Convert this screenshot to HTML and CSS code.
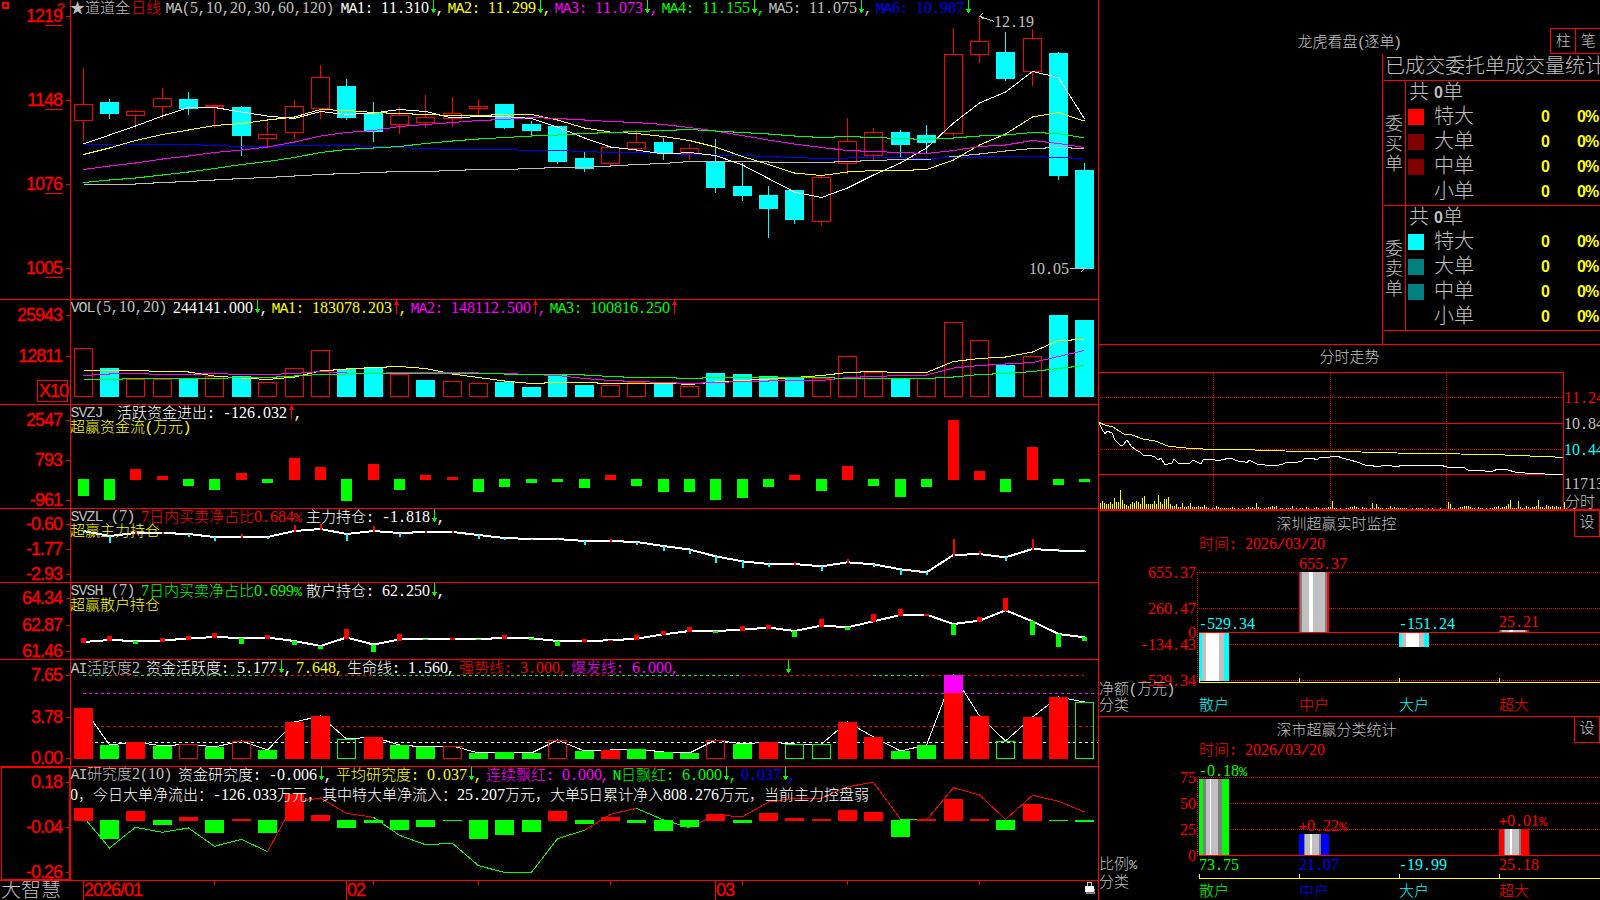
FILE: index.html
```html
<!DOCTYPE html>
<html lang="zh-CN">
<head>
    <meta charset="UTF-8">
    <meta name="viewport" content="width=device-width, initial-scale=1">
    <title>道道全 日线</title>
    <link rel="stylesheet" href="styles.css">
</head>
<body>
<div class="terminal">
    <div class="left">
        <div class="pane pane-k"><svg class="axis" id="axis-k"></svg><svg class="plot" id="plot-k"></svg></div>
        <div class="pane pane-vol"><svg class="axis" id="axis-vol"></svg><svg class="plot" id="plot-vol"></svg></div>
        <div class="pane pane-svzj"><svg class="axis" id="axis-svzj"></svg><svg class="plot" id="plot-svzj"></svg></div>
        <div class="pane pane-svzl"><svg class="axis" id="axis-svzl"></svg><svg class="plot" id="plot-svzl"></svg></div>
        <div class="pane pane-svsh"><svg class="axis" id="axis-svsh"></svg><svg class="plot" id="plot-svsh"></svg></div>
        <div class="pane pane-act"><svg class="axis" id="axis-act"></svg><svg class="plot" id="plot-act"></svg></div>
        <div class="pane pane-res"><svg class="axis" id="axis-res"></svg><svg class="plot" id="plot-res"></svg></div>
        <div class="dates">
            <div class="brand">大智慧</div>
            <svg class="plot" id="dates"></svg>
        </div>
    </div>

    <div class="right">
        <div class="orders">
            <div class="orders-head">
                <div class="title">龙虎看盘<span class="paren">(</span>逐单<span class="paren">)</span></div>
                <div class="tabs"><span>柱</span><span>笔</span></div>
            </div>
            <div class="stat">
                <div class="stat-title">已成交委托单成交量统计</div>
                <div class="group">
                    <div class="side">委买单</div>
                    <div class="rows">
                        <div class="total">共<b>0</b>单</div>
                        <div class="row"><i class="sw red"></i><span>特大</span><b>0</b><b>0%</b></div>
                        <div class="row"><i class="sw maroon"></i><span>大单</span><b>0</b><b>0%</b></div>
                        <div class="row"><i class="sw maroon"></i><span>中单</span><b>0</b><b>0%</b></div>
                        <div class="row"><i class="sw"></i><span>小单</span><b>0</b><b>0%</b></div>
                    </div>
                </div>
                <div class="group">
                    <div class="side">委卖单</div>
                    <div class="rows">
                        <div class="total">共<b>0</b>单</div>
                        <div class="row"><i class="sw cyan"></i><span>特大</span><b>0</b><b>0%</b></div>
                        <div class="row"><i class="sw teal"></i><span>大单</span><b>0</b><b>0%</b></div>
                        <div class="row"><i class="sw teal"></i><span>中单</span><b>0</b><b>0%</b></div>
                        <div class="row"><i class="sw"></i><span>小单</span><b>0</b><b>0%</b></div>
                    </div>
                </div>
            </div>
        </div>
        <div class="minute">
            <div class="title">分时走势</div>
            <svg id="minute"></svg>
        </div>
        <div class="monitor">
            <div class="panel-head"><div class="title">深圳超赢实时监控</div><span class="set">设</span></div>
            <svg id="monitor"></svg>
        </div>
        <div class="classify">
            <div class="panel-head"><div class="title">深市超赢分类统计</div><span class="set">设</span></div>
            <svg id="classify"></svg>
        </div>
    </div>
</div>
<script src="charts.js"></script>
</body>
</html>
```

FILE: styles.css
```css
* {
    box-sizing: border-box;
}

body {
    margin: 0;
    width: 1600px;
    height: 900px;
    overflow: hidden;
    background: #000;
    color: #c0c0c0;
    font-family: "Liberation Sans", "Noto Sans CJK SC", sans-serif;
    font-size: 15px;
    font-weight: 300;
}

svg {
    display: block;
    overflow: hidden;
    shape-rendering: crispEdges;
}

.terminal {
    display: grid;
    grid-template-columns: 1099px 501px;
    height: 900px;
}

.left {
    border-right: 1px solid #f00;
}

.pane,
.dates {
    display: grid;
    grid-template-columns: 71px 1027px;
    overflow: hidden;
}

.pane {
    border-bottom: 1px solid #f00;
}

.pane-k { height: 300px; }
.pane-vol { height: 105px; }
.pane-svzj { height: 104px; }
.pane-svzl { height: 74px; }
.pane-svsh { height: 77px; }
.pane-act { height: 107px; }
.pane-res { height: 114px; }

.axis,
.plot {
    width: 100%;
    height: 100%;
}

.axis {
    border-right: 1px solid #f00;
}

.dates {
    height: 19px;
}

.brand {
    padding-left: 1px;
    font-size: 20px;
    line-height: 19px;
    white-space: nowrap;
}

/* chart text */
text {
    font-family: "Liberation Mono", "Noto Sans CJK SC", monospace;
    font-size: 15px;
    text-anchor: middle;
}

.d {
    font-family: "Liberation Serif", serif;
    font-size: 16px;
}

.p {
    font-size: 13.5px;
}

.scale {
    font-family: "Liberation Sans", sans-serif;
    font-size: 18px;
    letter-spacing: -1px;
    text-anchor: end;
    fill: #f00;
    stroke: #f00;
    stroke-width: 0.3px;
}

.scale.start {
    text-anchor: start;
}

/* right side */
.right {
    display: grid;
    grid-template-rows: 345px 166px 206px 183px;
    overflow: hidden;
}

.right > div {
    overflow: hidden;
    border-bottom: 1px solid #f00;
}

.right > .minute {
    border-bottom-width: 2px;
}

.right > .classify {
    border-bottom: 0;
}

.title {
    text-align: center;
    white-space: nowrap;
}

.paren {
    display: inline-block;
    width: 7px;
}

.orders-head {
    display: grid;
    grid-template-columns: 1fr auto 1fr;
    height: 54px;
    padding-top: 28px;
}

.orders-head .title {
    grid-column: 2;
    line-height: 28px;
}

.tabs {
    display: flex;
    justify-self: end;
    width: 50px;
    height: 26px;
    border: 1px solid #f00;
    border-right: 0;
}

.tabs span {
    width: 25px;
    line-height: 23px;
    text-align: center;
}

.tabs span + span {
    border-left: 1px solid #f00;
}

.stat {
    width: 218px;
    height: 290px;
    margin-left: auto;
    padding-left: 1px;
    border-left: 1px solid #f00;
    font-size: 20px;
}

.stat-title {
    height: 26px;
    padding-left: 1px;
    line-height: 25px;
    white-space: nowrap;
}

.group {
    display: grid;
    grid-template-columns: 21px 1fr;
    height: 125px;
    border-top: 1px solid #f00;
}

.group:last-child {
    height: 126px;
    border-bottom: 1px solid #f00;
}

.side {
    padding: 33px 0 0 1px;
    width: 20px;
    font-size: 18px;
    line-height: 20px;
    word-break: break-all;
}

.rows {
    border-left: 1px solid #f00;
}

.total,
.row {
    height: 25px;
    line-height: 23px;
    white-space: nowrap;
}

.total {
    height: 24px;
    padding-left: 3px;
}

.total b {
    display: inline-block;
    width: 14px;
    color: #c0c0c0;
    font-size: 16px;
    font-weight: bold;
    line-height: 20px;
    text-align: right;
    vertical-align: 1px;
}

.row {
    display: grid;
    grid-template-columns: 26px 101px 36px 1fr;
    padding-left: 2px;
    align-items: center;
}

.row span {
    margin-top: -2px;
}

.row b {
    margin-top: -2px;
    color: #ff0;
    font-size: 16px;
    font-weight: bold;
}

.row b:nth-child(3),
.row b:nth-child(4) {
    padding-left: 6px;
}

.row b:nth-child(4) {
    letter-spacing: -1px;
}

.sw {
    width: 16px;
    height: 16px;
    margin-top: -2px;
}

.red { background: #f00; }
.maroon { background: #800000; }
.cyan { background: #0ff; }
.teal { background: #008080; }

.minute .title {
    height: 27px;
    line-height: 24px;
}

#minute {
    width: 501px;
    height: 137px;
}

.panel-head {
    display: grid;
    grid-template-columns: 475px 26px;
    height: 25px;
}

.panel-head .title {
    line-height: 26px;
}

.set {
    border: 1px solid #f00;
    border-top: 0;
    line-height: 22px;
    text-align: center;
}

#monitor {
    width: 501px;
    height: 180px;
}

#classify {
    width: 501px;
    height: 158px;
}
```

FILE: charts.js
```js
var RED = '#f00', CYAN = '#0ff', GREEN = '#0f0', YELLOW = '#ff0',
    PINK = '#f0f', BLUE = '#00f', WHITE = '#fff', GRAY = '#c0c0c0', DARK = '#808080';

// x of the n-th trading day
function cx(i) {
    return Math.floor(83.15 + 26.361 * i);
}

function put(id, box, html) {
    var el = document.getElementById(id);
    el.setAttribute('viewBox', box);
    el.setAttribute('preserveAspectRatio', 'none');
    el.innerHTML = html.join('');
}

function rect(x, y, w, h, color) {
    return '<rect x="' + x + '" y="' + y + '" width="' + w + '" height="' + h + '" fill="' + color + '"/>';
}

function box(x, y, w, h, color) {
    return '<rect x="' + (x + 0.5) + '" y="' + (y + 0.5) + '" width="' + (w - 1) + '" height="' + (h - 1) +
        '" fill="none" stroke="' + color + '"/>';
}

function poly(pts, color, width) {
    return '<polyline fill="none" stroke="' + color + '" stroke-width="' + (width || 1) + '" points="' + pts.join(' ') + '"/>';
}

function series(ys, color, width, from) {
    return poly(ys.map(function (y, i) {
        return (cx(i + (from || 0)) + 0.5) + ',' + (y + 0.01);
    }), color, width);
}

function dash(x1, y1, x2, y2, color, pattern) {
    return '<line x1="' + x1 + '" y1="' + y1 + '" x2="' + x2 + '" y2="' + y2 + '" stroke="' + color +
        '" stroke-dasharray="' + (pattern || '1 1') + '"/>';
}

function cell(ch) {
    return ch.charCodeAt(0) > 255 ? 15 : 8;
}

function width(s) {
    return s.split('').reduce(function (sum, ch) { return sum + cell(ch); }, 0);
}

function kind(ch) {
    if (/[0-9]/.test(ch)) return 'd';
    return ch === '%' ? 'p' : 'c';
}

// fixed grid text: 8px for latin, 15px for chinese
function text(x, y, s, color) {
    var out = '', run = '', xs = [], last = null;
    function flush() {
        if (run) {
            out += '<tspan class="' + last + '" x="' + xs.join(' ') + '">' + run + '</tspan>';
        }
        run = '';
        xs = [];
    }
    s.split('').forEach(function (ch) {
        if (kind(ch) !== last) flush();
        last = kind(ch);
        run += ch;
        xs.push(x + cell(ch) / 2);
        x += cell(ch);
    });
    flush();
    return '<text y="' + y + '" fill="' + color + '" xml:space="preserve">' + out + '</text>';
}

function arrow(x, top, dir) {
    return dir === 'd' ?
        rect(x, top, 1, 13, GREEN) + rect(x - 2, top + 9, 5, 1, GREEN) + rect(x - 1, top + 10, 3, 2, GREEN) :
        rect(x, top, 1, 14, RED) + rect(x - 1, top + 2, 3, 2, RED) + rect(x - 2, top + 4, 5, 1, RED);
}

// items: [text, color, arrow, comma]
function legend(x, top, y, items) {
    return items.map(function (it) {
        var s = text(x, y, it[0], it[1]);
        x += width(it[0]);
        if (it[2]) {
            s += arrow(x + 4, top, it[2]);
            x += 8;
        }
        if (it[3] !== false) {
            s += text(x - 1, y, ',', it[1]);
            x += 8;
        }
        x += 3;
        return s;
    }).join('');
}

function scale(labels) {
    return labels.map(function (l) {
        return '<text class="scale" x="62" y="' + (l[1] + 6) + '">' + l[0] + '</text>' + rect(66, l[1], 4, 1, RED);
    }).join('');
}

/* ---------- 日K ---------- */
// up(1)/down(0), high, top, bottom, low
var candles = [
    [1,68,104,120,141],[0,99,102,114,119],[1,110,111,115,129],[1,88,98,106,119],[0,92,99,109,115],
    [1,105,105,106,128],[0,106,107,136,156],[1,122,134,138,146],[1,100,106,132,139],[1,65,77,108,119],
    [0,79,86,118,120],[0,102,113,132,142],[1,107,115,124,134],[1,95,117,122,128],[1,97,113,118,127],
    [1,99,106,108,115],[0,104,104,128,129],[0,121,124,131,135],[0,126,126,162,164],[0,152,158,169,172],
    [1,147,147,163,165],[1,130,142,148,152],[0,138,142,153,160],[1,144,148,153,160],[0,139,161,188,193],
    [0,163,186,196,201],[0,186,195,209,238],[0,190,190,220,224],[1,176,177,221,226],[1,118,141,163,174],
    [1,128,132,155,160],[0,130,132,145,157],[0,125,135,143,153],[1,28,54,133,136],[1,16,41,54,63],
    [0,32,52,79,81],[1,29,38,71,86],[0,52,53,176,180],[0,163,170,269,269]
];
var ma = [
    [GRAY, [184.5,184.5,184,182.5,181.5,180,178.5,177.5,176,174.5,173.5,172.5,171.5,171.5,170.5,169.5,169.5,168.5,167.5,167.5,166,164.5,163.5,161.5,161.5,161.5,162,162.5,162.5,161.5,160.5,159.5,159.5,156.5,154,151,148.5,147.5,148.5]],
    [BLUE, [144.5,144.5,144.5,144.5,144.5,145.5,146.5,146.5,145.5,145.5,145.5,146.5,147.5,148.5,149.5,149.5,149.5,150.5,150.5,151.5,152.5,152.5,153.5,154.5,155,155.5,156.5,157.5,158.5,158,157.5,157.5,158.5,157.5,157,156.5,156.5,157.5,158.5]],
    [WHITE, [144,135,126,116,107.5,107.5,112,116,118.5,111.5,114.5,113,109.5,111.5,118,116.5,116.5,118.5,127,138,147,150,154,152.5,155.5,165,178.5,192,197.5,188,175,163,148,123,103,92,71.5,77.5,119]],
    [YELLOW, [154.5,148,140.5,134.5,130,125.5,123.5,120,117,109.5,110.5,112.5,113.5,114.5,115.5,115.5,114.5,114.5,120,128,132,133.5,136.5,140.5,147,156.5,164.5,173,175.5,172,170.5,170.5,169.5,160,145,134,117,112.5,121]],
    [PINK, [169.5,166,163,159,156,152.5,150,147,142,136,132.5,130.5,126.5,124.5,122.5,120.5,119.5,117.5,118.5,120,121.5,122.5,124.5,127.5,131,135.5,140,144,147.5,150.5,151.5,152.5,153.5,150.5,146.5,145,140.5,143.5,147.5]],
    [GREEN, [182.5,180,178,175,172,168.5,164.5,161.5,157.5,152.5,149.5,148,146.5,143.5,141,139,137.5,136,135,133.5,132.5,131.5,130.5,129.5,131,132.5,134,136,137.5,136.5,137.5,138.5,139.5,138,136,135,132.5,133.5,138]]
];

put('axis-k', '0 0 70 299', [
    rect(2, 2, 7, 7, RED), rect(4, 4, 3, 3, '#000'),
    '<text x="61" y="13" style="font-weight:bold" fill="#c00">?</text>',
    scale([['1219', 16], ['1148', 100], ['1076', 184], ['1005', 268]]),
    rect(45, 25, 18, 1, RED), rect(45, 109, 18, 1, RED), rect(45, 193, 18, 1, RED), rect(45, 277, 18, 1, RED)
]);
put('plot-k', '71 0 1027 299', [
    candles.map(function (c, i) {
        var x = cx(i), color = c[0] ? RED : CYAN;
        if (!c[0]) return rect(x, c[1], 1, c[4] - c[1], color) + rect(x - 9, c[2], 19, c[3] - c[2], color);
        return rect(x, c[1], 1, c[2] - c[1], color) + rect(x, c[3], 1, c[4] - c[3], color) +
            box(x - 9, c[2], 19, c[3] - c[2] + 1, color);
    }).join(''),
    ma.map(function (m) { return series(m[1], m[0]); }).join(''),
    text(70, 13, '★', GRAY), text(85, 13, '道道全', GRAY), text(131, 13, '日线', RED),
    text(166, 13, 'MA(5,10,20,30,60,120)', GRAY),
    legend(341, 0, 13, [
        ['MA1: 11.310', WHITE, 'd'], ['MA2: 11.299', YELLOW, 'd'], ['MA3: 11.073', PINK, 'd'],
        ['MA4: 11.155', GREEN, 'd'], ['MA5: 11.075', GRAY, 'd'], ['MA6: 10.987', BLUE, 'd', false]
    ]),
    poly(['983,13', '980,16.5', '984,19'], GRAY), poly(['980,16.5', '994,21.5'], GRAY),
    text(994, 27, '12.19', GRAY),
    text(1029, 274, '10.05', GRAY),
    poly(['1070,268.5', '1084,268.5'], GRAY), poly(['1081,265', '1084.5,268.5', '1081,272'], GRAY)
]);

/* ---------- VOL ---------- */
var vol = [
    [1,348],[0,368],[1,379],[1,379],[0,379],[1,376],[0,376],[1,382],[1,368],[1,350],[0,369],[0,368],[1,374],
    [0,380],[1,381],[1,383],[0,382],[0,387],[0,375],[0,385],[1,385],[1,382],[0,383],[1,386],[0,373],[0,374],
    [0,376],[0,378],[1,378],[1,356],[1,372],[0,379],[1,378],[1,322],[1,340],[0,365],[1,356],[0,315],[0,320]
];
put('axis-vol', '0 300 70 104', [
    scale([['25943', 315], ['12811', 356]]),
    box(37, 380, 31, 22, RED),
    '<text class="scale start" x="39" y="397">X10</text>'
]);
put('plot-vol', '71 300 1027 104', [
    vol.map(function (v, i) {
        return (v[0] ? box : rect)(cx(i) - 9, v[1], 19, 397 - v[1], v[0] ? RED : CYAN);
    }).join(''),
    series([370.5,370.5,370.5,371.5,372,376,378,379.5,377,371,369,367.5,366.5,368.5,374,377.5,381,383.5,382.5,382.5,383.5,383.5,383,384.5,382,380.5,379,377.5,375.5,372.5,371.5,372.5,372.5,361.5,358.5,357,352,340.5,339.5], YELLOW),
    series([375.5,374,373.5,374.5,374.5,373.5,374.5,374.5,373.5,371.5,373,373.5,372.5,372.5,372.5,373,373.5,374.5,375.5,378.5,380.5,381.5,382.5,383.5,382.5,381.5,381,380.5,380.5,377.5,376.5,375.5,375,368,365.5,364,362.5,356.5,350.5], PINK),
    series([379.5,379.5,378.5,378.5,378.5,378.5,377.5,377.5,376,374.5,374,373.5,373.5,373.5,373.5,373.5,374,374.5,374.5,375,376.5,377.5,377.5,378.5,377.5,377.5,377.5,377.5,377.5,378.5,378.5,378.5,378.5,377,374.5,373.5,371.5,368.5,365.5], GREEN),
    text(71, 312, 'VOL(5,10,20)', GRAY),
    legend(173, 300, 313, [
        ['244141.000', WHITE, 'd'], ['MA1: 183078.203', YELLOW, 'u'],
        ['MA2: 148112.500', PINK, 'u'], ['MA3: 100816.250', GREEN, 'u', false]
    ])
]);

/* ---------- SVZJ ---------- */
var flow = [496,500,469,476,486,490,473,483,458,467,501,464,490,475,477,492,487,483,482,488,475,486,492,492,500,498,487,475,491,466,486,497,487,420,471,492,447,485,482];
put('axis-svzj', '0 405 70 103', [scale([['2547', 420], ['793', 460], ['-961', 500]])]);
put('plot-svzj', '71 405 1027 103', [
    flow.map(function (y, i) {
        return y < 480 ? rect(cx(i) - 5, y, 11, 480 - y, RED) : rect(cx(i) - 5, 479, 11, y - 479, GREEN);
    }).join(''),
    text(71, 417, 'SVZJ', GRAY),
    legend(117, 405, 418, [['活跃资金进出: -126.032', WHITE, 'u']]),
    text(70, 432, '超赢资金流(万元)', YELLOW)
]);

/* ---------- SVZL ---------- */
var main = [531,536,533,533,534,537,537,537,531,529,534,531,533,532,532,535,538,539,539,541,541,542,546,549.5,556.3,561.3,564,564,566.3,562.3,564.3,569.3,572.3,555,554,557.3,549,550.5,551];
// end of the tick, negative means red
var mainTick = [533,543,-531,-532,537,541,-534,539,-525,-524,541,-526,537,-531,-531,539,540,540,540,545,-539,545,551,554,563,568,567,-562,571,-559,567,575,575,-539,-551,561,-539,552,552];
put('axis-svzl', '0 509 70 73', [scale([['-0.60', 524], ['-1.77', 549], ['-2.93', 574]])]);
put('plot-svzl', '71 509 1027 73', [
    text(70, 536, '超赢主力持仓', YELLOW),
    series(main, WHITE, 2),
    mainTick.map(function (t, i) {
        var y = Math.round(main[i]);
        return t < 0 ? rect(cx(i), -t, 2, y + 1 + t, RED) : rect(cx(i), y, 2, Math.max(1, t - y), CYAN);
    }).join(''),
    text(71, 521, 'SVZL (7)', GRAY),
    text(141, 522, '7日内买卖净占比0.684%', RED),
    legend(306, 509, 522, [['主力持仓: -1.818', WHITE, 'd']])
]);

/* ---------- SVSH ---------- */
var retail = [642,640,641,640.5,638.5,637,638,637.5,641,646,637.5,644.5,639.5,639,639,639,638,638.3,641,641,640.3,638.7,634.3,631,631,629.7,627.5,631,625.5,627.3,621.3,615,614.7,624,620.7,610.3,621.3,634,637.3];
var retailBar = [-638,-636,644,-638,-636,-633,644,-635,645,649,-629,652,-634,640,-638,640,-635,640,646,-639,-640,-635,-631,-627,633,-626,-625,637,-619,630,-614,-609,-614,635,-617,-598,635,647,641];
put('axis-svsh', '0 583 70 76', [scale([['64.34', 598], ['62.87', 625], ['61.46', 651]])]);
put('plot-svsh', '71 583 1027 76', [
    series(retail, WHITE, 2),
    retailBar.map(function (t, i) {
        var y = Math.round(retail[i]);
        return t < 0 ? rect(cx(i) - 2, -t, 5, Math.max(1, y + t + 1), RED) : rect(cx(i) - 2, y, 5, Math.max(1, t - y), GREEN);
    }).join(''),
    text(71, 595, 'SVSH (7)', GRAY),
    text(141, 596, '7日内买卖净占比0.699%', GREEN),
    legend(306, 583, 596, [['散户持仓: 62.250', WHITE, 'd']]),
    text(70, 610, '超赢散户持仓', YELLOW)
]);

/* ---------- AI活跃度 ---------- */
// R/G filled, r/g hollow
var active = [
    ['R',708],['G',745],['R',742],['G',746],['r',744],['G',747],['r',741],['G',750],['R',722],['R',716],
    ['g',739],['R',737],['G',745],['G',747],['r',746],['G',753],['G',752],['G',753],['r',740],['G',751],
    ['R',750],['G',749],['G',752],['G',753],['r',740],['G',744],['R',742],['g',744],['g',744],['R',722],
    ['R',737],['G',751],['G',745],['R',675],['R',716],['g',741],['R',717],['R',697],['g',702]
];
var trend = [[0,1,GREEN],[1,2,RED],[2,7,GREEN],[7,11,RED],[11,19,GREEN],[19,20,RED],[20,25,GREEN],[25,30,RED],[30,32,GREEN],[32,38,RED]];
put('axis-act', '0 660 70 106', [scale([['7.65', 675], ['3.78', 717], ['0.00', 758]])]);
put('plot-act', '71 660 1027 106', [
    trend.map(function (t) { return dash(cx(t[0]), 675.5, cx(t[1]), 675.5, t[2], '3 3'); }).join(''),
    dash(83, 693.5, 1098, 693.5, PINK, '3 3'),
    dash(95, 726.5, 1098, 726.5, RED, '3 3'),
    dash(95, 742.5, 1098, 742.5, WHITE, '3 3'),
    series(active.map(function (a) { return a[1]; }), WHITE),
    active.map(function (a, i) {
        var hollow = a[0] === 'r' || a[0] === 'g';
        return (hollow ? box : rect)(cx(i) - 9, a[1], 19, 759 - a[1], a[0].toUpperCase() === 'R' ? RED : GREEN);
    }).join(''),
    rect(cx(33) - 9, 675, 19, 18, PINK),
    text(71, 673, 'AI活跃度2', GRAY),
    legend(146, 660, 673, [
        ['资金活跃度: 5.177', WHITE, 'd'], ['7.648', YELLOW], ['生命线: 1.560', WHITE],
        ['强势线: 3.000', RED], ['爆发线: 6.000', PINK]
    ]),
    arrow(788, 660, 'd')
]);

/* ---------- AI研究度 ---------- */
var research = [808,839,811,825,817,833,819,833,794,815,828,823,830,827,821,839,835,832,811,824,817,823,831,827,814,823,813,818,819,810,812,837,819,799,819,830,804,821,822];
var researchDown = [1,3,5,7,10,11,12,13,14,15,16,17,19,21,22,23,25,31,35,37,38];
var avg = [817,848,827.3,832.3,828,846.3,839.3,851.7,802,798,813.3,817.3,835.3,844.7,843.3,865.7,872.3,872.3,838.7,830.3,814.3,808.3,820,827.7,815,816.7,802,798.3,798.3,786.7,782.3,819.3,820,787.7,795,819.3,795.3,801.3,812];
var avgColor = [[0,7,GREEN],[7,11,RED],[11,19,GREEN],[19,21,RED],[21,23,GREEN],[23,31,RED],[31,32,GREEN],[32,38,RED]];
put('axis-res', '0 767 70 113', [
    box(1, 767, 69, 113, RED),
    scale([['0.18', 782], ['-0.04', 827], ['-0.26', 872]])
]);
put('plot-res', '71 767 1027 113', [
    avgColor.map(function (a) { return series(avg.slice(a[0], a[1] + 1), a[2], 1, a[0]); }).join(''),
    research.map(function (y, i) {
        return researchDown.indexOf(i) < 0 ? rect(cx(i) - 9, y, 19, 821 - y, RED) : rect(cx(i) - 9, 820, 19, y - 820, GREEN);
    }).join(''),
    text(71, 779, 'AI研究度2(10)', GRAY),
    legend(178, 767, 780, [
        ['资金研究度: -0.006', WHITE, 'd'], ['平均研究度: 0.037', YELLOW, 'd'], ['连续飘红: 0.000', PINK],
        ['N日飘红: 6.000', GREEN, 'd'], ['0.037', BLUE, 'd']
    ]),
    text(70, 800, '0，今日大单净流出：-126.033万元，其中特大单净流入：25.207万元，大单5日累计净入808.276万元，当前主力控盘弱', WHITE)
]);

put('dates', '71 881 1027 19', [
    [[83, '2026/01'], [346, '02'], [715, '03']].map(function (m) {
        return rect(m[0], 881, 1, 19, RED) + '<text class="scale start" x="' + (m[0] + 1) + '" y="896">' + m[1] + '</text>';
    }).join(''),
    [109, 214, 373, 478, 610, 742, 847, 979].map(function (x) { return rect(x, 881, 1, 4, RED); }).join(''),
    box(1087, 882, 5, 5, GRAY), rect(1086, 889, 9, 5, DARK), rect(1085, 886, 9, 6, WHITE)
]);

/* ---------- 分时 ---------- */
var minuteVol = [
    6,8,6,5,5,7,5,11,7,7,19,9,5,4,3,5,7,6,8,7,5,11,13,5,5,5,5,8,5,14,7,5,10,10,12,5,3,3,5,2,
    2,6,2,2,3,6,2,2,2,3,2,2,4,2,1,0,1,1,3,2,1,1,1,1,1,1,2,1,0,1,0,1,0,1,2,1,2,1,6,2,
    1,0,1,1,2,2,3,2,3,0,1,1,0,1,1,1,3,0,1,0,1,1,0,2,1,0,0,1,2,1,0,1,1,1,2,2,8,1,1,0,
    1,0,0,1,1,2,2,3,2,1,0,2,1,1,0,1,6,1,5,2,1,1,0,1,1,3,1,2,1,1,1,1,1,1,0,0,1,0,1,1,
    1,1,0,0,1,0,1,0,0,0,1,0,0,0,7,5,1,1,0,1,2,2,3,3,3,2,1,1,0,2,1,1,0,1,0,1,1,2,2,3,
    1,2,2,3,5,9,1,1,1,8,2,1,1,3,2,1,2,2,3,9,2,2,1,4,3,2,3,2,3,2,2,0,7
];
put('minute', '1099 372 501 137', [
    rect(1099, 372, 465, 1, RED), rect(1563, 372, 1, 137, RED),
    dash(1100, 397.5, 1563, 397.5, RED), dash(1100, 449.5, 1563, 449.5, RED),
    rect(1099, 423, 465, 1, RED), rect(1099, 474, 465, 1, RED),
    dash(1213.5, 373, 1213.5, 509, RED), dash(1330.5, 373, 1330.5, 509, RED), dash(1446.5, 373, 1446.5, 509, RED),
    minuteVol.map(function (h, i) { return h ? rect(1100 + i * 2, 509 - h, 1, h, YELLOW) : ''; }).join(''),
    rect(1099, 422, 2, 2, YELLOW),
    poly(['1100,423','1105,425','1113,427','1119,431','1124,434','1132,435','1143,439','1155,441','1168,446','1180,447.5','1191,448.5','1214,449.5','1255,450','1285,451','1330,451.5','1361,452','1397,453','1460,454','1505,455','1530,456','1555,457','1563,457.5'], YELLOW),
    poly(['1099,423','1102,429','1105,434','1107,431','1112,433','1115,440','1121,446','1123,445','1127,440','1131,446','1136,450','1140,452','1144,456','1149,455','1155,457','1158,460','1161,458','1165,465','1168,464','1172,463','1174,459','1178,463','1185,464','1190,463','1193,460','1197,462','1201,464','1203,460','1210,459','1215,460','1221,460','1230,458','1238,461','1243,461','1247,463','1249,460','1257,464','1265,465','1275,466','1283,464','1287,462','1290,463','1298,462','1302,461','1305,458','1312,458','1317,460','1320,457','1330,457','1337,456','1342,458','1350,460','1357,462','1365,465','1371,465','1376,467','1387,465','1397,467','1402,465','1415,466','1425,465','1435,466','1440,465','1447,467','1453,467','1463,467','1468,470','1480,470','1485,471','1493,471','1498,469','1508,470','1515,472','1525,473','1545,474','1552,474.5','1563,474'], WHITE),
    text(1564, 403, '11.24', RED), text(1564, 429, '10.84', GRAY), text(1564, 455, '10.44', CYAN),
    text(1564, 489, '11713', GRAY), text(1565, 507, '分时', GRAY)
]);

// vertical stripes make the bars look like cylinders
function cylinder(x, y, h, stripes) {
    return stripes.map(function (s) {
        var r = rect(x, y, s[0], h, s[1]);
        x += s[0];
        return r;
    }).join('');
}

function marks(y) {
    return rect(1199, y, 401, 1, YELLOW) + [1199, 1299, 1399, 1499].map(function (x) {
        return rect(x, y - 4, 1, 4, YELLOW);
    }).join('');
}

function right(x, y, s, color) {
    return text(x - width(s), y, s, color);
}

var sell = [[3, CYAN], [4, GRAY], [13, WHITE], [5, GRAY], [5, CYAN]];
var buy = [[1, RED], [2, DARK], [7, GRAY], [4, WHITE], [12, GRAY], [2, DARK], [2, RED]];
put('monitor', '1099 536 501 180', [
    text(1199, 549, '时间: 2026/03/20', RED),
    [572, 608, 644, 680].map(function (y) { return dash(1199, y + 0.5, 1600, y + 0.5, RED); }).join(''),
    dash(1197.5, 572, 1197.5, 681, RED),
    rect(1199, 632, 401, 1, RED),
    right(1196, 578, '655.37', RED), right(1196, 614, '260.47', RED), right(1196, 638, '0', RED),
    right(1196, 650, '-134.43', RED), right(1196, 686, '-529.34', RED),
    cylinder(1199, 633, 48, sell), cylinder(1299, 572, 60, buy), cylinder(1399, 633, 14, sell), cylinder(1499, 630, 2, buy),
    marks(682),
    text(1199, 629, '-529.34', CYAN), text(1299, 569, '655.37', RED), text(1399, 629, '-151.24', CYAN), text(1499, 627, '25.21', RED),
    text(1199, 710, '散户', CYAN), text(1299, 710, '中户', RED), text(1399, 710, '大户', CYAN), text(1499, 710, '超大', RED),
    text(1099, 694, '净额(万元)', GRAY), text(1099, 710, '分类', GRAY)
]);

function share(color) {
    return [[5, color], [1, DARK], [5, GRAY], [2, WHITE], [7, GRAY], [2, DARK], [8, color]];
}
put('classify', '1099 742 501 158', [
    text(1199, 755, '时间: 2026/03/20', RED),
    [777, 803, 829].map(function (y) { return dash(1199, y + 0.5, 1600, y + 0.5, RED); }).join(''),
    dash(1197.5, 777, 1197.5, 856, RED),
    right(1196, 783, '75', RED), right(1196, 809, '50', RED), right(1196, 835, '25', RED), right(1196, 861, '0', RED),
    cylinder(1199, 779, 76, [[4, GREEN], [3, DARK], [4, GRAY], [1, WHITE], [7, GRAY], [4, DARK], [7, GREEN]]),
    cylinder(1299, 834, 21, share(BLUE)), cylinder(1499, 829, 26, share(RED)),
    rect(1199, 855, 401, 1, RED),
    marks(878),
    text(1199, 776, '-0.18%', GREEN), text(1299, 831, '+0.22%', RED), text(1499, 826, '+0.01%', RED),
    text(1199, 870, '73.75', GREEN), text(1299, 870, '21.07', BLUE), text(1399, 870, '-19.99', CYAN), text(1499, 870, '25.18', RED),
    text(1199, 896, '散户', GREEN), text(1299, 896, '中户', BLUE), text(1399, 896, '大户', CYAN), text(1499, 896, '超大', RED),
    text(1099, 869, '比例%', GRAY), text(1099, 887, '分类', GRAY)
]);
```
